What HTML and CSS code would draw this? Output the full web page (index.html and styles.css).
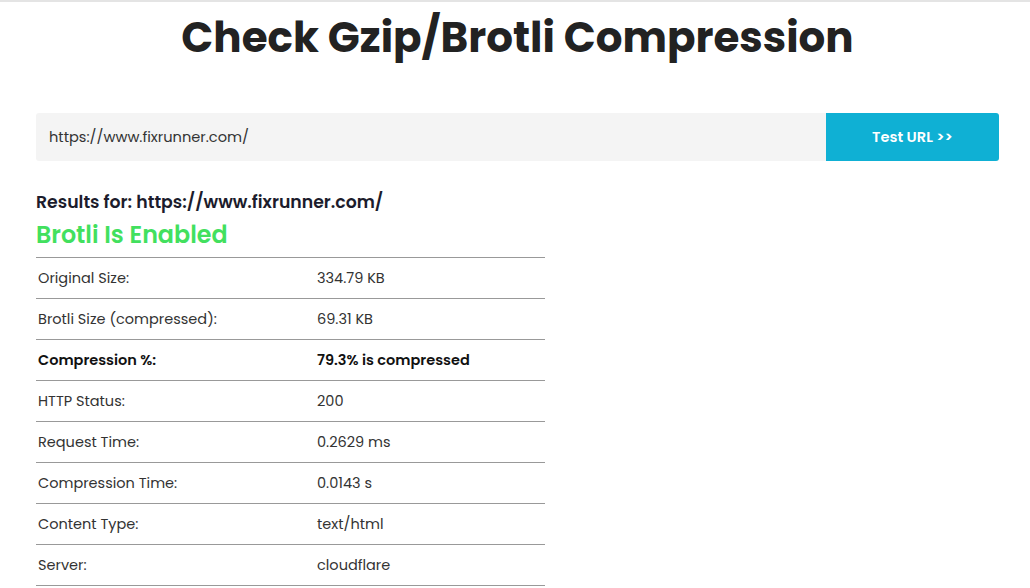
FILE: index.html
```html
<!DOCTYPE html>
<html lang="en">
<head>
  <meta charset="UTF-8">
  <meta name="viewport" content="width=device-width, initial-scale=1.0">
  <title>Check Gzip/Brotli Compression</title>
  <link rel="stylesheet" href="styles.css">
</head>
<body>
  <div class="page">
    <h1>Check Gzip/Brotli Compression</h1>
    <form class="test-form" onsubmit="return false">
      <input type="text" class="url-input" value="https://www.fixrunner.com/">
      <button type="submit" class="test-btn">Test URL &gt;&gt;</button>
    </form>
    <div class="results">
      <h3 class="results-for">Results for: https://www.fixrunner.com/</h3>
      <h2 class="status">Brotli Is Enabled</h2>
      <table class="result-table">
        <tr><td>Original Size:</td><td>334.79 KB</td></tr>
        <tr><td>Brotli Size (compressed):</td><td>69.31 KB</td></tr>
        <tr class="strong"><td>Compression %:</td><td>79.3% is compressed</td></tr>
        <tr><td>HTTP Status:</td><td>200</td></tr>
        <tr><td>Request Time:</td><td>0.2629 ms</td></tr>
        <tr><td>Compression Time:</td><td>0.0143 s</td></tr>
        <tr><td>Content Type:</td><td>text/html</td></tr>
        <tr><td>Server:</td><td>cloudflare</td></tr>
      </table>
    </div>
  </div>
</body>
</html>
```

FILE: styles.css
```css
body {
  margin: 0;
  padding: 0;
  font-family: Poppins, "Open Sans", "DejaVu Sans", sans-serif;
  color: #333;
  border-top: 2px solid #e4e4e4;
  background: #fff;
}
.page {
  padding: 0 31px 0 36px;
}
h1 {
  margin: 10px 0 0;
  text-align: center;
  font-size: 42px;
  font-weight: 700;
  line-height: 52px;
  color: #222;
}
.test-form {
  display: flex;
  margin-top: 49px;
  height: 48px;
}
.url-input {
  flex: 1;
  border: none;
  background: #f4f4f4;
  border-radius: 3px 0 0 3px;
  padding: 0 13px;
  font-family: inherit;
  font-size: 14.6px;
  color: #333;
  outline: none;
}
.test-btn {
  width: 173px;
  border: none;
  background: #0fb0d4;
  color: #fff;
  font-family: inherit;
  font-size: 14.6px;
  font-weight: 600;
  border-radius: 0 3px 3px 0;
  cursor: pointer;
}
.results {
  width: 509px;
  margin-top: 29px;
}
.results-for {
  margin: 0;
  font-size: 17.3px;
  font-weight: 600;
  line-height: 24px;
  color: #1c1c2c;
}
.status {
  margin: 5px 0 6px;
  font-size: 23.8px;
  font-weight: 600;
  line-height: 32px;
  color: #42e05e;
}
.result-table {
  width: 100%;
  border-collapse: collapse;
  font-size: 14.5px;
}
.result-table td {
  border-top: 1px solid #999;
  border-bottom: 1px solid #999;
  height: 40px;
  padding: 0 2px;
  color: #333;
}
.result-table td:first-child {
  width: 275px;
}
.result-table .strong td {
  font-weight: 600;
  color: #111;
}
```
